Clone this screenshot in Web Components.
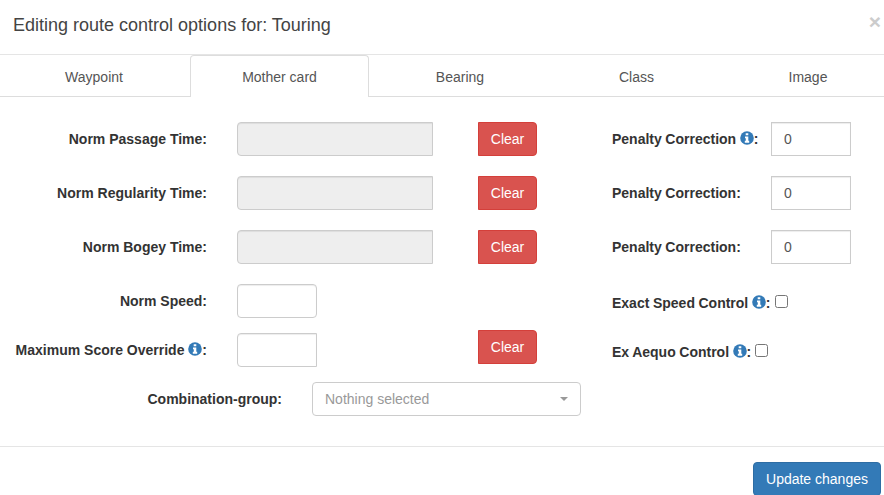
<!DOCTYPE html>
<html lang="en">
<head>
<meta charset="utf-8">
<title>Editing route control options</title>
<style>
html,body{margin:0;padding:0;background:#fff;overflow:hidden;height:495px}
body{font:14px/20px "Liberation Sans",Arial,sans-serif;color:#333}
</style>
</head>
<body>
<x-modal>
  <span slot="title">Editing route control options for: Touring</span>
  <x-tabs slot="tabs">
    <x-tab style="width:190px;padding-right:2px">Waypoint</x-tab>
    <x-tab active style="width:179px">Mother card</x-tab>
    <x-tab style="width:182px">Bearing</x-tab>
    <x-tab style="width:171px">Class</x-tab>
    <x-tab style="width:172px">Image</x-tab>
  </x-tabs>
  <x-row gap="20">
    <x-label slot="label">Norm Passage Time:</x-label>
    <x-input slot="control" disabled shape="left" width="196"></x-input>
    <x-btn slot="action" kind="danger">Clear</x-btn>
    <x-side slot="side">
      <x-label slot="label" left>Penalty Correction <x-info></x-info>:</x-label>
      <x-input slot="control" shape="none" width="80" value="0"></x-input>
    </x-side>
  </x-row>
  <x-row gap="20">
    <x-label slot="label">Norm Regularity Time:</x-label>
    <x-input slot="control" disabled shape="left" width="196"></x-input>
    <x-btn slot="action" kind="danger">Clear</x-btn>
    <x-side slot="side">
      <x-label slot="label" left>Penalty Correction:</x-label>
      <x-input slot="control" shape="none" width="80" value="0"></x-input>
    </x-side>
  </x-row>
  <x-row gap="20">
    <x-label slot="label">Norm Bogey Time:</x-label>
    <x-input slot="control" disabled shape="left" width="196"></x-input>
    <x-btn slot="action" kind="danger">Clear</x-btn>
    <x-side slot="side">
      <x-label slot="label" left>Penalty Correction:</x-label>
      <x-input slot="control" shape="none" width="80" value="0"></x-input>
    </x-side>
  </x-row>
  <x-row gap="15">
    <x-label slot="label">Norm Speed:</x-label>
    <x-input slot="control" shape="all" width="80"></x-input>
    <x-check slot="side">Exact Speed Control <x-info></x-info>:</x-check>
  </x-row>
  <x-row gap="15">
    <x-label slot="label">Maximum Score Override <x-info></x-info>:</x-label>
    <x-input slot="control" shape="left" width="80"></x-input>
    <x-btn slot="action" kind="danger" raised>Clear</x-btn>
    <x-check slot="side">Ex Aequo Control <x-info></x-info>:</x-check>
  </x-row>
  <x-combo label="Combination-group:" placeholder="Nothing selected"></x-combo>
  <x-btn slot="footer" kind="primary">Update changes</x-btn>
</x-modal>
<script>
function def(name, html, init){
  customElements.define(name, class extends HTMLElement{
    constructor(){super();this.attachShadow({mode:'open'}).innerHTML=html;}
    connectedCallback(){if(init)init(this,this.shadowRoot);}
  });
}
def('x-modal',`<style>
:host{display:block;width:884px;height:495px;overflow:hidden;background:#fff}
header{height:54px;box-sizing:border-box;padding:12px 3px 0 13px;display:flex;justify-content:space-between}
.t{font-size:18px;line-height:26px;color:#444}
.x{font-size:21px;line-height:21px;font-weight:700;color:#ccc;margin-top:-1px}
hr{margin:0;border:0;height:1px;background:#e5e5e5}
main{height:349px;box-sizing:border-box;padding-top:25px}
.tabs{display:block}
footer{display:flex;justify-content:flex-end;padding:15px 3px 0 0}
</style>
<header><div class="t"><slot name="title"></slot></div><div class="x">×</div></header>
<hr>
<div class="tabs"><slot name="tabs"></slot></div>
<main><slot></slot></main>
<hr>
<footer><slot name="footer"></slot></footer>`);
def('x-tabs',`<style>
:host{display:flex;height:42px;box-sizing:border-box;border-bottom:1px solid #ddd;width:884px}
</style><slot></slot>`);
def('x-tab',`<style>
:host{display:block;flex:none;box-sizing:border-box;height:42px;padding:11px 0 0;text-align:center;color:#555;line-height:20px;border:1px solid transparent;border-bottom:0;border-radius:4px 4px 0 0}
:host([active]){background:#fff;border-color:#ddd}
</style><slot></slot>`);
def('x-row',`<style>
:host{display:grid;grid-template-columns:207px 271px 134px 1fr;grid-template-rows:34px;height:34px;align-items:center}
.c{padding-left:30px}
</style>
<slot name="label"></slot><div class="c"><slot name="control"></slot></div><div><slot name="action"></slot></div><div><slot name="side"></slot></div>`,
(el)=>{el.style.marginBottom=el.getAttribute('gap')+'px';});
def('x-label',`<style>
:host{display:block;font-weight:700;text-align:right;color:#333;line-height:20px;white-space:nowrap}
:host([left]){text-align:left;word-spacing:-.33px}
</style><slot></slot>`);
def('x-info',`<style>
:host{display:inline-block;width:14px;height:14px;vertical-align:-1px}
svg{display:block}
</style><svg width="14" height="14" viewBox="0 0 14 14"><circle cx="7" cy="7" r="6.8" fill="#337ab7"/><path fill="#fff" d="M5.700 2.300h2.600v2H5.700zM5 5.500h3.300v4.300H9.200v1.900H4.800V9.800h1V7.300H5z"/></svg>`);
def('x-input',`<style>
:host{display:block}
input{display:block;box-sizing:border-box;height:34px;padding:6px 12px;border:1px solid #ccc;background:#fff;font:14px/20px "Liberation Sans",Arial,sans-serif;color:#555;outline:0;margin:0;box-shadow:inset 0 1px 1px rgba(0,0,0,.075)}
input:disabled{background:#eee}
</style><input type="text">`,
(el,sr)=>{const i=sr.querySelector('input');
  i.style.width=el.getAttribute('width')+'px';
  if(el.hasAttribute('disabled'))i.disabled=true;
  if(el.hasAttribute('value'))i.value=el.getAttribute('value');
  const s=el.getAttribute('shape');
  i.style.borderRadius=s==='all'?'4px':s==='left'?'4px 0 0 4px':'0';
});
def('x-btn',`<style>
:host{display:block;width:max-content}
:host([raised]){margin-bottom:6px}
button{display:block;box-sizing:border-box;height:34px;margin:0;padding:6px 0;font:14px/20px "Liberation Sans",Arial,sans-serif;color:#fff;border:1px solid;cursor:pointer;text-align:center}
:host([kind=danger]) button{background:#d9534f;border-color:#d43f3a;border-radius:0 4px 4px 0;width:59px}
:host([kind=primary]) button{background:#337ab7;border-color:#2e6da4;border-radius:4px;width:128px}
</style><button type="button"><slot></slot></button>`);
def('x-side',`<style>
:host{display:grid;grid-template-columns:159px 80px;align-items:center}
</style><slot name="label"></slot><slot name="control"></slot>`);
def('x-check',`<style>
:host{display:flex;align-items:center;font-weight:700;color:#333;line-height:20px;white-space:nowrap;word-spacing:-.33px;padding-top:4px;height:20px;box-sizing:content-box}
input{width:13px;height:13px;margin:-3px 0 0 4px;flex:none}
</style><span><slot></slot></span><input type="checkbox">`);
def('x-combo',`<style>
:host{display:flex;align-items:center;height:34px}
label{width:282px;text-align:right;font-weight:700;color:#333;flex:none}
.s{margin-left:30px;width:269px;height:34px;box-sizing:border-box;border:1px solid #ccc;border-radius:4px;background:#fff;padding:6px 12px;color:#999;line-height:20px;display:flex;justify-content:space-between;align-items:center}
i{display:block;width:0;height:0;border:4px solid transparent;border-top-color:#999;border-bottom:0}
</style><label></label><div class="s"><span></span><i></i></div>`,
(el,sr)=>{sr.querySelector('label').textContent=el.getAttribute('label');sr.querySelector('span').textContent=el.getAttribute('placeholder');});
</script>
</body>
</html>
